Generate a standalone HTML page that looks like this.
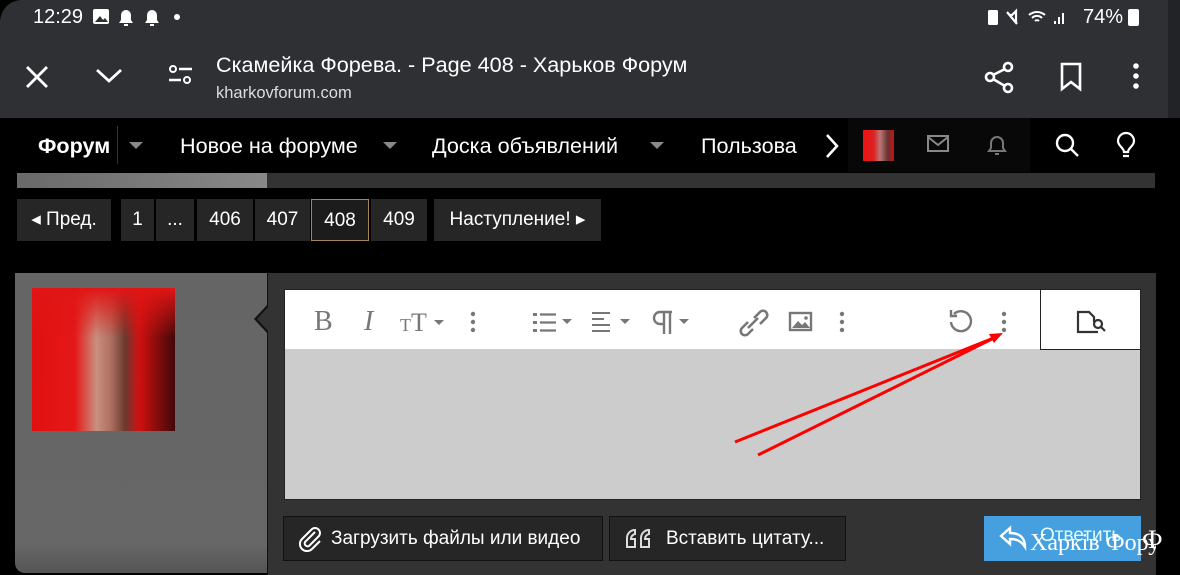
<!DOCTYPE html>
<html><head><meta charset="utf-8"><style>
*{margin:0;padding:0;box-sizing:border-box}
body{width:1180px;height:575px;overflow:hidden;background:#000;font-family:"Liberation Sans","Noto Sans CJK SC",sans-serif;position:relative}
.a{position:absolute}
.top{left:0;top:0;width:1180px;height:118px;background:#2f3034;border-top-left-radius:22px}
.w{color:#fff}
.nav{left:0;top:118px;width:1168px;height:54px;background:#000}
.nav span{position:absolute;top:15px;color:#fff;font-size:21.6px}
.tri{position:absolute;width:0;height:0;border-left:7px solid transparent;border-right:7px solid transparent;border-top:7px solid #888}
.pg{top:199px;height:42px;background:#262626;color:#fff;font-size:19px;line-height:42px;text-align:center}
.btn{top:516px;height:45px;background:#262626;border:1px solid #111;color:#fff;font-size:19px;line-height:43px}
</style></head><body>
<div class="a top"></div>
<div class="a" style="left:1168px;top:0;width:12px;height:118px;background:#222326"></div>
<div class="a w" style="left:33px;top:6px;font-size:20px">12:29</div>
<svg class="a" style="left:92px;top:8px" width="95" height="18"><rect x="1" y="1" width="16" height="15" rx="2" fill="#fff"/><path d="M3 14l5-6 3 4 2-2 3 4z" fill="#2f3034"/><path d="M27 15h14l-2-3v-5a5 5 0 0 0-10 0v5z M32 16h4v2h-4z" fill="#fff"/><path d="M53 15h14l-2-3v-5a5 5 0 0 0-10 0v5z M58 16h4v2h-4z" fill="#fff"/><circle cx="85" cy="9" r="3" fill="#fff"/></svg>
<svg class="a" style="left:985px;top:7px" width="95" height="20"><rect x="3" y="3" width="10" height="15" rx="1.5" fill="#fff"/><path d="M22 5l10 12M24 8h3l4-4v12" stroke="#fff" stroke-width="2.2" fill="none"/><path d="M44 8a12 12 0 0 1 16 0M47 11a7 7 0 0 1 10 0M50 14a3 3 0 0 1 4 0" stroke="#fff" stroke-width="2" fill="none"/><path d="M70 17v-3M74 17v-7M78 17v-11" stroke="#fff" stroke-width="2"/></svg>
<div class="a w" style="left:1083px;top:6px;font-size:20px">74%</div>
<div class="a" style="left:1128px;top:9px;width:11px;height:17px;background:#fff;border-radius:2px"></div>
<svg class="a" style="left:20px;top:60px" width="180" height="36"><path d="M7 7l20 20M27 7l-20 20" stroke="#fff" stroke-width="2.8"/><path d="M77 10l12 11 12-11" stroke="#fff" stroke-width="2.8" fill="none"/><circle cx="153" cy="9" r="3" stroke="#fff" stroke-width="2" fill="none"/><path d="M159 9h13M149 20h12" stroke="#fff" stroke-width="2.4"/><circle cx="167" cy="20" r="3" stroke="#fff" stroke-width="2" fill="none"/></svg>
<div class="a w" style="left:216px;top:52px;font-size:21.6px">Скамейка Форева. - Page 408 - Харьков Форум</div>
<div class="a" style="left:216px;top:84px;font-size:16.5px;color:#ddd">kharkovforum.com</div>
<svg class="a" style="left:980px;top:58px" width="170" height="38"><circle cx="28" cy="9" r="4" stroke="#fff" stroke-width="2.6" fill="none"/><circle cx="10" cy="19" r="4" stroke="#fff" stroke-width="2.6" fill="none"/><circle cx="28" cy="30" r="4" stroke="#fff" stroke-width="2.6" fill="none"/><path d="M13 17l12-6M13 21l12 7" stroke="#fff" stroke-width="2.6"/><path d="M82 6h18v25l-9-7-9 7z" stroke="#fff" stroke-width="2.6" fill="none"/><circle cx="156" cy="8" r="2.8" fill="#fff"/><circle cx="156" cy="18" r="2.8" fill="#fff"/><circle cx="156" cy="28" r="2.8" fill="#fff"/></svg>
<div class="a nav">
<span style="left:38px;font-weight:bold">Форум</span>
<div class="a" style="left:117px;top:8px;width:1px;height:38px;background:#333"></div>
<div class="tri" style="left:129px;top:24px"></div>
<span style="left:180px">Новое на форуме</span><div class="tri" style="left:383px;top:24px"></div>
<span style="left:432px">Доска объявлений</span><div class="tri" style="left:650px;top:24px"></div>
<span style="left:701px">Пользова</span>
<svg class="a" style="left:822px;top:14px" width="20" height="28"><path d="M5 3l10 11-10 11" stroke="#fff" stroke-width="2.6" fill="none"/></svg>
<div class="a" style="left:848px;top:0;width:182px;height:54px;background:#080808"></div>
<div class="a" style="left:863px;top:12px;width:31px;height:31px;background:linear-gradient(90deg,#e11 0%,#d22 35%,#b77 55%,#633 80%,#c11 100%)"></div>
<svg class="a" style="left:926px;top:15px" width="100" height="26"><rect x="2" y="3" width="20" height="15" stroke="#888" stroke-width="2" fill="none"/><path d="M2 4l10 8 10-8" stroke="#888" stroke-width="2" fill="none"/><path d="M63 18h16l-2-3v-5a6 6 0 0 0-12 0v5z M69 21h4" stroke="#777" stroke-width="2" fill="none"/></svg>
<svg class="a" style="left:1052px;top:13px" width="90" height="30"><circle cx="13" cy="12" r="8" stroke="#fff" stroke-width="2.4" fill="none"/><path d="M19 18l7 7" stroke="#fff" stroke-width="2.4"/><path d="M72 21c0-4-6-6-6-11a8 8 0 0 1 16 0c0 5-6 7-6 11z M71 25h6" stroke="#fff" stroke-width="2.2" fill="none"/></svg>
</div>
<div class="a" style="left:17px;top:173px;width:1138px;height:15px;background:#333"></div>
<div class="a" style="left:17px;top:173px;width:250px;height:15px;background:linear-gradient(90deg,#6a6a6a,#888)"></div>
<div class="a pg" style="left:17px;width:94px">◂ Пред.</div>
<div class="a pg" style="left:121px;width:33px">1</div>
<div class="a pg" style="left:156px;width:38px">...</div>
<div class="a pg" style="left:197px;width:56px">406</div>
<div class="a pg" style="left:255px;width:55px">407</div>
<div class="a pg" style="left:311px;width:58px;border:1px solid #a8865a;background:#1c1c1c">408</div>
<div class="a pg" style="left:371px;width:56px">409</div>
<div class="a pg" style="left:434px;width:167px">Наступление! ▸</div>
<div class="a" style="left:15px;top:273px;width:253px;height:300px;background:linear-gradient(#656565,#676767 90%,#555);border-bottom-left-radius:10px"></div>
<div class="a" style="left:32px;top:288px;width:143px;height:143px;background:linear-gradient(90deg,#e01010 0%,#e51818 30%,#c89080 45%,#b07060 55%,#6a3a30 65%,#d01010 75%,#400808 100%)"></div>
<div class="a" style="left:32px;top:288px;width:143px;height:50px;background:linear-gradient(#e01515,rgba(220,20,20,0))"></div>
<div class="a" style="left:267px;top:273px;width:889px;height:302px;background:#333;border-left:1px solid #111"></div>
<svg class="a" style="left:252px;top:303px" width="17" height="34"><path d="M16 1L2 16l14 15z" fill="#111"/><path d="M17 3L5 16l12 13z" fill="#333"/></svg>
<div class="a" style="left:284px;top:289px;width:857px;height:211px;background:#ccc;border:1px solid #222"></div>
<div class="a" style="left:285px;top:290px;width:855px;height:59px;background:#fff"></div>
<div class="a" style="left:1040px;top:289px;width:101px;height:61px;background:#fff;border:1px solid #222"></div>
<div class="a" style="left:314px;top:306px;font-family:'Liberation Serif',serif;font-size:28px;color:#777">B</div>
<div class="a" style="left:364px;top:306px;font-family:'Liberation Serif',serif;font-size:28px;color:#777;font-style:italic">I</div>
<div class="a" style="left:400px;top:308px;font-family:'Liberation Serif',serif;font-size:26px;color:#777"><span style="font-size:18px">T</span>T</div>
<svg class="a" style="left:430px;top:306px" width="720" height="36"><path d="M4 14l5 5 5-5z" fill="#777"/><circle cx="43" cy="8" r="2.2" fill="#777"/><circle cx="43" cy="16" r="2.2" fill="#777"/><circle cx="43" cy="24" r="2.2" fill="#777"/>
<rect x="103" y="7" width="4" height="3" fill="#777"/><rect x="103" y="15" width="4" height="3" fill="#777"/><rect x="103" y="23" width="4" height="3" fill="#777"/><path d="M110 8.5h16M110 16.5h16M110 24.5h16" stroke="#777" stroke-width="2.2"/><path d="M132 13l5 5 5-5z" fill="#777"/>
<path d="M162 7h18M162 13h12M162 19h18M162 25h18" stroke="#777" stroke-width="2"/><path d="M190 13l5 5 5-5z" fill="#777"/>
<path d="M234 6v22M240 6v22M242 6h-12a6 6 0 0 0 0 12h4" stroke="#777" stroke-width="2.4" fill="none"/><path d="M249 13l5 5 5-5z" fill="#777"/>
<path d="M318 16l-6 6a4 4 0 0 0 6 6l5-5M324 12l6-6a4 4 0 0 1 6 6l-6 6M318 22l10-10" stroke="#777" stroke-width="2.6" fill="none"/>
<rect x="360" y="7" width="21" height="17" stroke="#777" stroke-width="2.4" fill="none"/><path d="M362 22l6-7 4 4 3-3 5 6z" fill="#777"/><circle cx="376" cy="12" r="1.8" fill="#777"/>
<circle cx="412" cy="8" r="2.2" fill="#777"/><circle cx="412" cy="16" r="2.2" fill="#777"/><circle cx="412" cy="24" r="2.2" fill="#777"/>
<path d="M524 8a10 10 0 1 1-3 8M521 4v6h6" stroke="#777" stroke-width="2.4" fill="none"/>
<circle cx="574" cy="8" r="2.2" fill="#777"/><circle cx="574" cy="16" r="2.2" fill="#777"/><circle cx="574" cy="24" r="2.2" fill="#777"/>
<path d="M668 26h-20v-20h11l5 5v5" stroke="#333" stroke-width="2.2" fill="none"/><circle cx="668" cy="18" r="4" stroke="#333" stroke-width="2.2" fill="none"/><path d="M671 21l4 4" stroke="#333" stroke-width="2.2"/></svg>
<svg class="a" style="left:0;top:0" width="1180" height="575"><path d="M735 442L996 337M758 455L996 337" stroke="#f00" stroke-width="3" fill="none"/><path d="M1003 333l-14 1 5 9z" fill="#f00"/></svg>
<div class="a btn" style="left:283px;width:320px;padding-left:47px">Загрузить файлы или видео</div>
<svg class="a" style="left:297px;top:526px" width="26" height="26"><path d="M18 6l-10 10a3 3 0 0 0 4 4l10-10a5 5 0 0 0-7-7l-10 10a7 7 0 0 0 10 10l8-8" stroke="#fff" stroke-width="2" fill="none"/></svg>
<div class="a btn" style="left:609px;width:237px;padding-left:56px">Вставить цитату...</div>
<svg class="a" style="left:624px;top:527px" width="30" height="24"><path d="M11 3a8 8 0 0 0-8 8v9h8v-8h-4a5 5 0 0 1 4-5zM25 3a8 8 0 0 0-8 8v9h8v-8h-4a5 5 0 0 1 4-5z" stroke="#ddd" stroke-width="2" fill="none"/></svg>
<div class="a" style="left:984px;top:516px;width:157px;height:45px;background:#46a0e0"></div>
<svg class="a" style="left:998px;top:524px" width="32" height="28"><path d="M12 4L3 12l9 8v-5c7 0 11 2 15 8 0-9-5-14-15-14z" stroke="#fff" stroke-width="2.4" fill="none"/></svg>
<div class="a" style="left:1040px;top:525px;font-size:19px;color:#dff">Ответить</div>
<div class="a" style="left:1030px;top:530px;font-family:'Liberation Serif',serif;font-size:24px;color:#fff;white-space:nowrap">Харків Форум</div>
<div class="a" style="left:1156px;top:118px;width:24px;height:457px;background:#000"></div>
<div class="a" style="left:1142px;top:525px;font-family:'Liberation Serif',serif;font-size:26px;color:#fff">Ф</div>
</body></html>
